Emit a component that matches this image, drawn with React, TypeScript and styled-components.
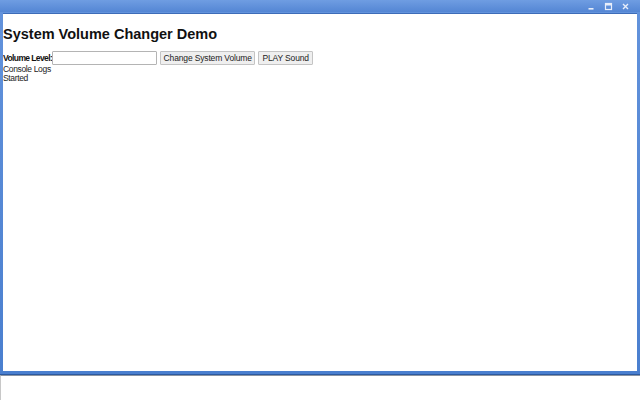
import React from "react";
import styled, { createGlobalStyle } from "styled-components";

const Global = createGlobalStyle`
  html, body { margin: 0; padding: 0; background: #ffffff; }
  body { font-family: "Liberation Sans", Arial, sans-serif; }
`;

const Desktop = styled.div`
  width: 640px;
  height: 400px;
  display: flex;
  flex-direction: column;
  background: #ffffff;
  overflow: hidden;
`;

const Window = styled.div`
  height: 375px;
  display: flex;
  flex-direction: column;
  background: linear-gradient(#6393dc, #4a7fcf);
  border-bottom: 1px solid #2c5aa0;
  box-sizing: border-box;
`;

const TitleBar = styled.div`
  height: 12px;
  display: flex;
  align-items: center;
  justify-content: flex-end;
  padding-right: 10px;
  gap: 8px;
  background: linear-gradient(#6f9de2, #5486d4);
`;

const CtrlIcon = styled.svg`
  width: 9px;
  height: 9px;
  display: block;
`;

const ClientArea = styled.div`
  flex: 1;
  margin: 1px 3px 3px 3px;
  background: #ffffff;
  border-top: 1px solid #3d6cb8;
  padding: 0;
  overflow: hidden;
`;

const Title = styled.h1`
  margin: 12px 0 8px 0;
  font-size: 14.5px;
  line-height: 17px;
  font-weight: bold;
  color: #111111;
`;

const ControlRow = styled.div`
  display: flex;
  align-items: center;
  gap: 3px;
  height: 14px;
`;

const Label = styled.label`
  font-size: 8.5px;
  font-weight: bold;
  letter-spacing: -0.6px;
  color: #111111;
  margin-right: -3px;
`;

const TextInput = styled.input`
  width: 105px;
  height: 14px;
  box-sizing: border-box;
  border: 1px solid #b4b4b4;
  border-radius: 1px;
  padding: 0 2px;
  font-size: 8px;
  background: #ffffff;
  outline: none;
`;

const Button = styled.button<{ $w: number }>`
  width: ${(p) => p.$w}px;
  height: 14px;
  box-sizing: border-box;
  padding: 0;
  border: 1px solid #c4c4c4;
  border-radius: 1px;
  background: #efefef;
  font-family: "Liberation Sans", Arial, sans-serif;
  font-size: 8.5px;
  letter-spacing: -0.15px;
  color: #222222;
`;

const LogLine = styled.div`
  font-size: 8.5px;
  line-height: 9px;
  letter-spacing: -0.35px;
  color: #222222;
`;

const LogBlock = styled.div`
  margin-top: 0;
`;

const Taskbar = styled.div`
  flex: 1;
  border-top: 1px solid #8a94a4;
  border-left: 1px solid #c8c8c8;
  background: #ffffff;
`;

export default function App() {
  return (
    <>
      <Global />
      <Desktop>
        <Window>
          <TitleBar>
            <CtrlIcon viewBox="0 0 9 9">
              <rect x="1.5" y="6" width="5" height="1.6" fill="#e8eefa" />
            </CtrlIcon>
            <CtrlIcon viewBox="0 0 9 9">
              <rect x="1.5" y="1.5" width="6" height="6" fill="none" stroke="#e8eefa" strokeWidth="1.2" />
              <rect x="1.5" y="1.5" width="6" height="2" fill="#e8eefa" />
            </CtrlIcon>
            <CtrlIcon viewBox="0 0 9 9">
              <path d="M2 2 L7 7 M7 2 L2 7" stroke="#e8eefa" strokeWidth="1.4" />
            </CtrlIcon>
          </TitleBar>
          <ClientArea>
            <Title>System Volume Changer Demo</Title>
            <ControlRow>
              <Label>Volume Level:</Label>
              <TextInput type="text" />
              <Button $w={95}>Change System Volume</Button>
              <Button $w={55}>PLAY Sound</Button>
            </ControlRow>
            <LogBlock>
              <LogLine>Console Logs</LogLine>
              <LogLine>Started</LogLine>
            </LogBlock>
          </ClientArea>
        </Window>
        <Taskbar />
      </Desktop>
    </>
  );
}
